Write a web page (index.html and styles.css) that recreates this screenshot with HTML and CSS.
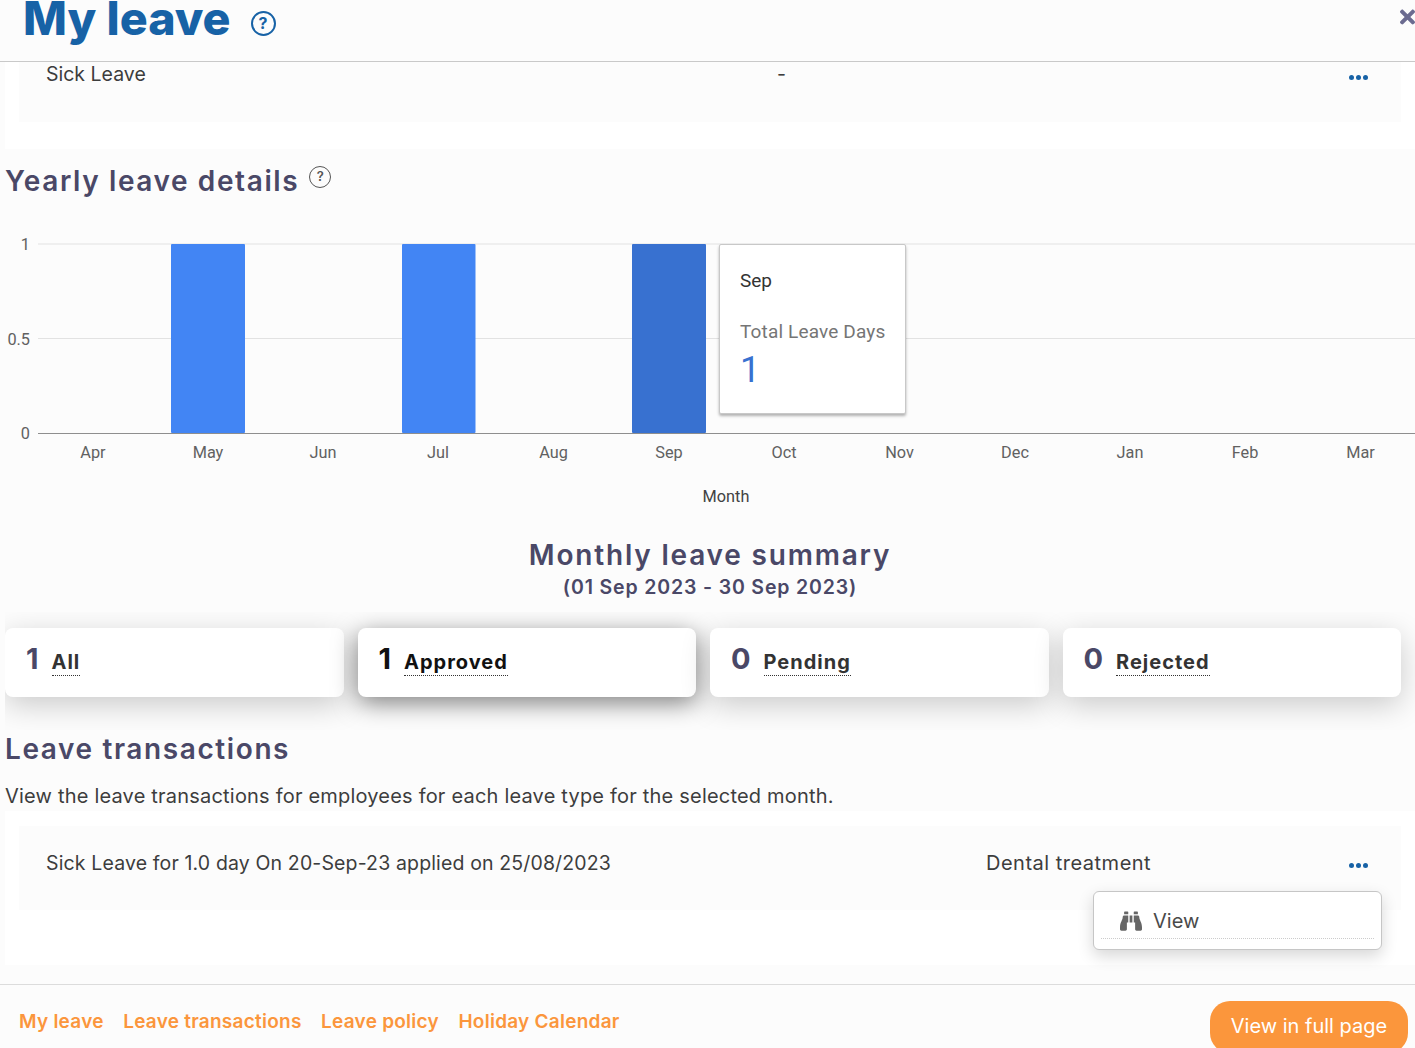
FILE: index.html
```html
<!DOCTYPE html>
<html lang="en">
<head>
    <meta charset="UTF-8">
    <meta name="viewport" content="width=device-width, initial-scale=1.0">
    <title>My leave</title>
    <link rel="stylesheet" href="styles.css">
</head>
<body>
    <div class="page">
        <header class="top-bar">
            <h1 class="page-title">My leave</h1>
            <span class="help-icon">?</span>
            <svg class="close-icon" viewBox="0 0 352 512" aria-hidden="true"><path d="M242.72 256l100.07-100.07c12.28-12.28 12.28-32.19 0-44.48l-22.24-22.24c-12.28-12.28-32.19-12.28-44.48 0L176 189.28 75.93 89.21c-12.28-12.28-32.19-12.28-44.48 0L9.21 111.45c-12.28 12.28-12.28 32.19 0 44.48L109.28 256 9.21 356.07c-12.28 12.28-12.28 32.19 0 44.48l22.24 22.24c12.28 12.28 32.2 12.28 44.48 0L176 322.72l100.07 100.07c12.28 12.28 32.2 12.28 44.48 0l22.24-22.24c12.28-12.28 12.28-32.19 0-44.48L242.72 256z"/></svg>
        </header>

        <main class="content">
            <section class="panel panel-balance">
                <div class="leave-row leave-row-short">
                    <span class="leave-name">Sick Leave</span>
                    <span class="leave-count">-</span>
                    <span class="dots"><i></i><i></i><i></i></span>
                </div>
            </section>

            <h2 class="section-title yearly-title">Yearly leave details<span class="hint-icon">?</span></h2>

            <div class="chart">
                <svg class="chart-svg" width="1415" height="290" viewBox="0 0 1415 290">
                    <g class="grid">
                        <line x1="38" y1="19" x2="1415" y2="19"/>
                        <line x1="38" y1="113.5" x2="1415" y2="113.5"/>
                    </g>
                    <rect class="bar" x="171" y="19" width="74" height="189" rx="1"/>
                    <rect class="bar" x="402" y="19" width="73.5" height="189" rx="1"/>
                    <rect class="bar bar-active" x="632" y="19" width="74" height="189" rx="1"/>
                    <line class="axis" x1="38" y1="208.5" x2="1415" y2="208.5"/>
                    <g class="ticks">
                        <text x="30" y="25">1</text>
                        <text x="30" y="120">0.5</text>
                        <text x="30" y="214">0</text>
                    </g>
                    <g class="months">
                        <text x="93" y="233">Apr</text>
                        <text x="208" y="233">May</text>
                        <text x="323" y="233">Jun</text>
                        <text x="438" y="233">Jul</text>
                        <text x="553.500" y="233">Aug</text>
                        <text x="669" y="233">Sep</text>
                        <text x="784" y="233">Oct</text>
                        <text x="899.500" y="233">Nov</text>
                        <text x="1015" y="233">Dec</text>
                        <text x="1130" y="233">Jan</text>
                        <text x="1245" y="233">Feb</text>
                        <text x="1360.500" y="233">Mar</text>
                    </g>
                    <text class="axis-title" x="726" y="277">Month</text>
                </svg>
                <div class="chart-tip">
                    <div class="tip-month">Sep</div>
                    <div class="tip-label">Total Leave Days</div>
                    <div class="tip-value">1</div>
                </div>
            </div>

            <div class="summary-head">
                <h2 class="section-title summary-title">Monthly leave summary</h2>
                <p class="summary-range">(01 Sep 2023 - 30 Sep 2023)</p>
            </div>

            <div class="stat-strip">
                <div class="stat-grid">
                    <div class="stat-card">
                        <span class="stat-num">1</span>
                        <span class="stat-label">All</span>
                    </div>
                    <div class="stat-card stat-card-on">
                        <span class="stat-num">1</span>
                        <span class="stat-label">Approved</span>
                    </div>
                    <div class="stat-card">
                        <span class="stat-num">0</span>
                        <span class="stat-label">Pending</span>
                    </div>
                    <div class="stat-card">
                        <span class="stat-num">0</span>
                        <span class="stat-label">Rejected</span>
                    </div>
                </div>
            </div>

            <h2 class="section-title trans-title">Leave transactions</h2>
            <p class="trans-note">View the leave transactions for employees for each leave type for the selected month.</p>

            <section class="panel panel-trans">
                <div class="leave-row leave-row-tall">
                    <span class="leave-name">Sick Leave for 1.0 day On 20-Sep-23 applied on 25/08/2023</span>
                    <span class="leave-reason">Dental treatment</span>
                    <span class="dots"><i></i><i></i><i></i></span>
                </div>
                <div class="row-menu">
                    <div class="row-menu-item">
                        <svg class="binoculars" viewBox="0 0 512 512" aria-hidden="true"><path d="M416 48c0-8.84-7.16-16-16-16h-64c-8.84 0-16 7.16-16 16v48h96V48zM63.91 159.99C61.4 253.84 3.46 274.22 0 404v44c0 17.67 14.33 32 32 32h96c17.67 0 32-14.33 32-32V288h32V128H95.84c-17.63 0-31.45 14.37-31.93 31.99zm384.18 0c-.48-17.62-14.3-31.99-31.93-31.99H320v160h32v160c0 17.67 14.33 32 32 32h96c17.67 0 32-14.33 32-32v-44c-3.46-129.78-61.4-150.16-63.91-244.01zM176 32h-64c-8.84 0-16 7.16-16 16v48h96V48c0-8.84-7.16-16-16-16zm48 256h64V128h-64v160z"/></svg>
                        <span>View</span>
                    </div>
                </div>
            </section>
        </main>

        <footer class="bottom-bar">
            <nav class="bottom-links">
                <a href="#">My leave</a>
                <a href="#">Leave transactions</a>
                <a href="#">Leave policy</a>
                <a href="#">Holiday Calendar</a>
            </nav>
            <button type="button" class="full-page-btn">View in full page</button>
        </footer>
    </div>
</body>
</html>
```

FILE: styles.css
```css
* {
    box-sizing: border-box;
}

body {
    margin: 0;
    background: #fcfcfc;
    color: #3a3a3a;
    font-family: "Inter", "Open Sans", sans-serif;
    overflow: hidden;
}

.page {
    height: 1048px;
    display: flex;
    flex-direction: column;
    overflow: hidden;
}

/* top bar, the title sits partly above the fold */
.top-bar {
    height: 62px;
    flex: none;
    border-bottom: 1px solid #c9c9c9;
    display: flex;
    align-items: flex-start;
    padding-left: 23px;
    position: relative;
}

.page-title {
    margin: -14px 0 0;
    font-size: 46.6px;
    line-height: 64px;
    font-weight: 800;
    color: #1762a6;
}

.help-icon {
    width: 25px;
    height: 25px;
    margin: 11px 0 0 20px;
    border: 2.5px solid #1762a6;
    border-radius: 50%;
    color: #1762a6;
    font-size: 16px;
    font-weight: 700;
    line-height: 20px;
    text-align: center;
}

.close-icon {
    position: absolute;
    right: 0;
    top: 6px;
    width: 15px;
    height: 22px;
    fill: #6b6b90;
}

.content {
    flex: 1;
    min-height: 0;
}

/* white panels with the grey rows inside */
.panel {
    margin-left: 5px;
    padding-left: 14px;
    padding-right: 14px;
    background: #fff;
    position: relative;
}

.panel-balance {
    height: 87px;
    padding-bottom: 27px;
}

.panel-trans {
    height: 154px;
    padding-top: 15px;
}

.leave-row {
    display: flex;
    align-items: flex-start;
    background: #fcfcfc;
    padding-left: 27px;
    font-size: 19.5px;
    color: #3d3d3d;
    position: relative;
}

.leave-row-short {
    height: 60px;
}

.leave-row-tall {
    height: 84px;
    padding-top: 25px;
    letter-spacing: 0.14px;
}

.leave-count {
    position: absolute;
    left: 758px;
    top: 0;
}

.leave-row-short .leave-name {
    line-height: 24px;
}

.leave-reason {
    position: absolute;
    left: 967px;
    font-size: 20px;
    letter-spacing: 0.5px;
}

.dots {
    position: absolute;
    left: 1330px;
    top: 13px;
    display: flex;
    gap: 2px;
}

.leave-row-tall .dots {
    top: 37px;
}

.dots i {
    width: 5px;
    height: 5px;
    border-radius: 50%;
    background: #1762a6;
}

/* section headings */
.section-title {
    margin: 0;
    color: #4a4867;
    font-size: 28px;
    line-height: 36px;
    font-weight: 600;
    letter-spacing: 1.6px;
}

.yearly-title {
    padding: 14px 0 0 5px;
    height: 76px;
}

.summary-title {
    letter-spacing: 1.8px;
}

.hint-icon {
    display: inline-block;
    vertical-align: 10px;
    width: 22px;
    height: 22px;
    margin-left: 10px;
    border: 1.5px solid #555;
    border-radius: 50%;
    color: #555;
    font-size: 13px;
    font-weight: 600;
    letter-spacing: 0;
    line-height: 19px;
    text-align: center;
}

/* yearly chart */
.chart {
    position: relative;
    height: 290px;
}

.chart-svg {
    display: block;
    font-family: "Roboto", sans-serif;
    font-size: 16.3px;
}

.grid line {
    stroke: #e2e2e2;
    stroke-width: 1;
}

.axis {
    stroke: #8e8e8e;
    stroke-width: 1;
}

.bar {
    fill: #4285f4;
}

.bar-active {
    fill: #3871d0;
}

.ticks text {
    fill: #616161;
    text-anchor: end;
}

.months text {
    fill: #616161;
    text-anchor: middle;
}

.axis-title {
    fill: #424242;
    text-anchor: middle;
}

.chart-tip {
    position: absolute;
    left: 719px;
    top: 19px;
    width: 187px;
    height: 170px;
    padding: 25px 0 0 20px;
    background: #fff;
    border: 1px solid #c8c8c8;
    border-radius: 2px;
    box-shadow: 0 2px 3px rgba(0, 0, 0, 0.3);
    font-family: "Roboto", sans-serif;
}

.tip-month {
    font-size: 19px;
    line-height: 22px;
    color: #333;
}

.tip-label {
    margin-top: 29px;
    font-size: 19px;
    line-height: 22px;
    letter-spacing: 0.15px;
    color: #757575;
}

.tip-value {
    margin-top: 7px;
    font-size: 36px;
    line-height: 40px;
    color: #3871d0;
}

/* monthly summary */
.summary-head {
    text-align: center;
    padding-left: 5px;
    height: 97px;
    padding-top: 22px;
}

.summary-range {
    margin: -1px 0 0;
    color: #4a4867;
    font-size: 19.5px;
    line-height: 30px;
    font-weight: 600;
    letter-spacing: 0.85px;
}

.stat-strip {
    margin-left: 5px;
    height: 118px;
    padding-top: 16px;
    overflow: hidden;
}

.stat-grid {
    width: 1396px;
    display: grid;
    grid-template-columns: repeat(4, 1fr);
    gap: 14px;
}

.stat-card {
    height: 69px;
    display: flex;
    align-items: center;
    gap: 13px;
    padding-left: 21px;
    background: #fff;
    border-radius: 8px;
    box-shadow: 0 8px 30px rgba(0, 0, 0, 0.2);
    color: #4a4867;
}

.stat-card-on {
    color: #111;
    box-shadow: 0 6px 24px rgba(0, 0, 0, 0.5);
}

.stat-num {
    font-size: 29px;
    font-weight: 700;
    margin-top: -8px;
}

.stat-label {
    font-size: 20px;
    line-height: 25px;
    font-weight: 700;
    letter-spacing: 1px;
    color: #333;
    border-bottom: 1px dotted #333;
}

.stat-card-on .stat-label {
    color: #111;
}

/* transactions */
.trans-title {
    padding: 1px 0 0 5px;
}

.trans-note {
    margin: 0;
    padding: 15px 0 0 5px;
    height: 44px;
    font-size: 20px;
    letter-spacing: 0.2px;
    line-height: 29px;
    color: #3d3d3d;
}

.row-menu {
    position: absolute;
    left: 1088px;
    top: 80px;
    width: 289px;
    height: 59px;
    padding: 0 7px;
    background: #fff;
    border: 1px solid #c6c6c6;
    border-radius: 6px;
    box-shadow: 0 6px 16px rgba(0, 0, 0, 0.16);
}

.row-menu-item {
    height: 47px;
    display: flex;
    align-items: center;
    gap: 11px;
    padding: 12px 0 0 19px;
    border-bottom: 1px dotted #ccc;
    font-size: 20px;
    color: #4a4a4a;
}

.binoculars {
    width: 22px;
    height: 22px;
    fill: #666;
}

/* footer links and the orange button */
.bottom-bar {
    height: 64px;
    flex: none;
    border-top: 1px solid #dcdcdc;
    padding: 16px 7px 0 19px;
    display: flex;
    justify-content: space-between;
    align-items: flex-start;
}

.bottom-links {
    display: flex;
    gap: 19.5px;
    padding-top: 9px;
}

.bottom-links a {
    color: #fb963c;
    font-size: 19px;
    letter-spacing: 0.25px;
    line-height: 24px;
    font-weight: 600;
    text-decoration: none;
}

.full-page-btn {
    width: 198px;
    height: 52px;
    border: none;
    border-radius: 20px;
    background: #fb963c;
    color: #fff;
    font-family: inherit;
    font-size: 20px;
    padding: 0 0 2px;
}
```
